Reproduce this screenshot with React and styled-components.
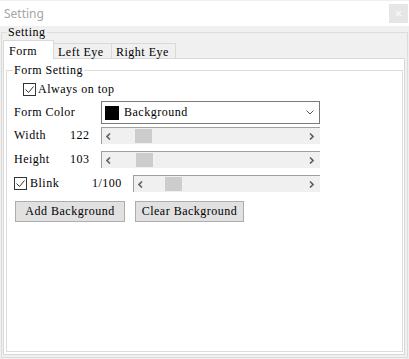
import React from "react";
import styled, { createGlobalStyle } from "styled-components";

const GlobalStyle = createGlobalStyle`
  html, body { margin: 0; padding: 0; background: #ffffff; }
  body { font-family: "Liberation Serif", "Noto Sans CJK SC", serif; }
  * { box-sizing: border-box; }
`;

const MONO = `font-family: "Liberation Serif", "Noto Sans CJK SC", serif; font-size: 12px; letter-spacing: 0.5px; color: #000;`;

const Window = styled.div`
  width: 409px;
  height: 359px;
  display: flex;
  flex-direction: column;
  background: #f0f0f0;
  overflow: hidden;
`;

const TitleBar = styled.div`
  height: 26px;
  flex: none;
  background: #ffffff;
  border-top: 1px solid #f0f0f0;
  display: flex;
  align-items: center;
  justify-content: space-between;
  padding: 0 1px 0 4px;
`;

const Title = styled.span`
  font-family: "Noto Sans", sans-serif;
  font-size: 12px;
  color: #a6a6a6;
  line-height: 14px;
  padding-top: 1px;
`;

const CloseBtn = styled.div`
  width: 19px;
  height: 19px;
  background: #e6e6e6;
  display: flex;
  align-items: center;
  justify-content: center;
`;

const Body = styled.div`
  flex: 1;
  display: flex;
  padding: 0 1px 1px 1px;
  min-height: 0;
`;

const GroupBox = styled.fieldset`
  margin: 0;
  flex: 1;
  min-width: 0;
  border: 1px solid #dcdcdc;
  padding: ${(p) => p.$pad};
  display: flex;
  flex-direction: column;
`;

const Legend = styled.legend`
  ${MONO};
  line-height: 12px;
  padding: 0 1px;
  margin-left: ${(p) => p.$ml}px;
`;

const TabStrip = styled.div`
  display: flex;
  align-items: flex-end;
  margin-bottom: -1px;
  position: relative;
  z-index: 1;
`;

const Tab = styled.div`
  ${MONO};
  width: ${(p) => p.$w}px;
  border: 1px solid #d9d9d9;
  border-bottom: none;
  ${(p) => (p.$joined ? "border-left: none;" : "")}
  background: ${(p) => (p.$active ? "#ffffff" : "#f0f0f0")};
  padding: ${(p) => (p.$active ? "4px 0 0 5px" : "2px 0 0 4px")};
  height: ${(p) => (p.$active ? "19px" : "15px")};
  line-height: 13px;
  margin-bottom: ${(p) => (p.$active ? "0" : "1px")};
  white-space: nowrap;
`;

const TabPanel = styled.div`
  flex: 1;
  background: #ffffff;
  border: 1px solid #d9d9d9;
  padding: 5px 1px 2px 2px;
  display: flex;
  flex-direction: column;
`;

const Rows = styled.div`
  display: flex;
  flex-direction: column;
`;

const Row = styled.div`
  display: flex;
  align-items: center;
  height: ${(p) => p.$h}px;
  margin-top: ${(p) => p.$mt}px;
  padding-left: ${(p) => p.$pl || 0}px;
  gap: ${(p) => p.$gap || 0}px;
`;

const Text = styled.span`
  ${MONO};
  line-height: 13px;
  white-space: nowrap;
  width: ${(p) => (p.$w ? `${p.$w}px` : "auto")};
  margin-left: ${(p) => p.$ml || 0}px;
  flex: none;
`;

const Box = styled.span`
  width: 13px;
  height: 13px;
  flex: none;
  border: 1px solid #333333;
  background: #ffffff;
  display: flex;
`;

const Combo = styled.div`
  width: 219px;
  height: 23px;
  border: 1px solid #7a7a7a;
  background: #ffffff;
  display: flex;
  align-items: center;
  padding: 0 5px 0 3px;
`;

const Swatch = styled.span`
  width: 14px;
  height: 14px;
  background: #000000;
  flex: none;
  margin-right: 5px;
`;

const ComboText = styled.span`
  ${MONO};
  line-height: 13px;
  flex: 1;
`;

const Track = styled.div`
  position: relative;
  width: ${(p) => p.$w}px;
  height: 17px;
  background: #f0f0f0;
  border-top: 1px solid #a0a0a0;
  border-left: 1px solid #a0a0a0;
  display: flex;
  align-items: center;
  justify-content: space-between;
  padding: 0 6px 0 4px;
`;

const Thumb = styled.div`
  position: absolute;
  top: 1px;
  width: 17px;
  height: 14px;
  background: #cdcdcd;
`;

const Button = styled.div`
  ${MONO};
  width: ${(p) => p.$w}px;
  height: 21px;
  background: #e1e1e1;
  border: 1px solid #adadad;
  display: flex;
  align-items: center;
  justify-content: center;
  line-height: 13px;
  margin-left: ${(p) => p.$ml || 0}px;
`;

const Check = () => (
  <svg width="11" height="11" viewBox="0 0 11 11">
    <path d="M1.5 5.5 L4.5 8.5 L9.5 2.5" fill="none" stroke="#333" strokeWidth="1" />
  </svg>
);

const Checkbox = () => (
  <Box>
    <Check />
  </Box>
);

const ArrowLeft = () => (
  <svg width="5" height="7" viewBox="0 0 5 7">
    <path d="M4 0.5 L1 3.5 L4 6.5" fill="none" stroke="#606060" strokeWidth="1.6" />
  </svg>
);

const ArrowRight = () => (
  <svg width="5" height="7" viewBox="0 0 5 7">
    <path d="M1 0.5 L4 3.5 L1 6.5" fill="none" stroke="#606060" strokeWidth="1.6" />
  </svg>
);

const ChevronDown = () => (
  <svg width="8" height="5" viewBox="0 0 8 5">
    <path d="M0.5 0.5 L4 4 L7.5 0.5" fill="none" stroke="#555" strokeWidth="1" />
  </svg>
);

const Scroll = ({ width, offset }) => (
  <Track $w={width}>
    <ArrowLeft />
    <Thumb style={{ left: offset }} />
    <ArrowRight />
  </Track>
);

export default function App() {
  return (
    <>
      <GlobalStyle />
      <Window>
        <TitleBar>
          <Title>Setting</Title>
          <CloseBtn>
            <svg width="7" height="7" viewBox="0 0 7 7">
              <path d="M1 1 L6 6 M6 1 L1 6" stroke="#f7f7f7" strokeWidth="1.4" />
            </svg>
          </CloseBtn>
        </TitleBar>
        <Body>
          <GroupBox $pad="2px 2px 2px 1px">
            <Legend $ml={4}>Setting</Legend>
            <TabStrip>
              <Tab $w={51} $active>Form</Tab>
              <Tab $w={58} $joined>Left Eye</Tab>
              <Tab $w={64} $joined>Right Eye</Tab>
            </TabStrip>
            <TabPanel>
              <GroupBox $pad="0 0 0 7px">
                <Legend $ml={-1}>Form Setting</Legend>
                <Rows>
                  <Row $h={14} $mt={6} $pl={9} $gap={2}>
                    <Checkbox />
                    <Text>Always on top</Text>
                  </Row>
                  <Row $h={23} $mt={5}>
                    <Text $w={87}>Form Color</Text>
                    <Combo>
                      <Swatch />
                      <ComboText>Background</ComboText>
                      <ChevronDown />
                    </Combo>
                  </Row>
                  <Row $h={17} $mt={3}>
                    <Text $w={56}>Width</Text>
                    <Text $w={31}>122</Text>
                    <Scroll width={219} offset={33} />
                  </Row>
                  <Row $h={17} $mt={7}>
                    <Text $w={56}>Height</Text>
                    <Text $w={31}>103</Text>
                    <Scroll width={219} offset={34} />
                  </Row>
                  <Row $h={17} $mt={7}>
                    <Checkbox />
                    <Text $w={62} $ml={3}>Blink</Text>
                    <Text $w={41}>1/100</Text>
                    <Scroll width={187} offset={31} />
                  </Row>
                  <Row $h={21} $mt={9}>
                    <Button $w={110} $ml={1}>Add Background</Button>
                    <Button $w={109} $ml={10}>Clear Background</Button>
                  </Row>
                </Rows>
              </GroupBox>
            </TabPanel>
          </GroupBox>
        </Body>
      </Window>
    </>
  );
}
